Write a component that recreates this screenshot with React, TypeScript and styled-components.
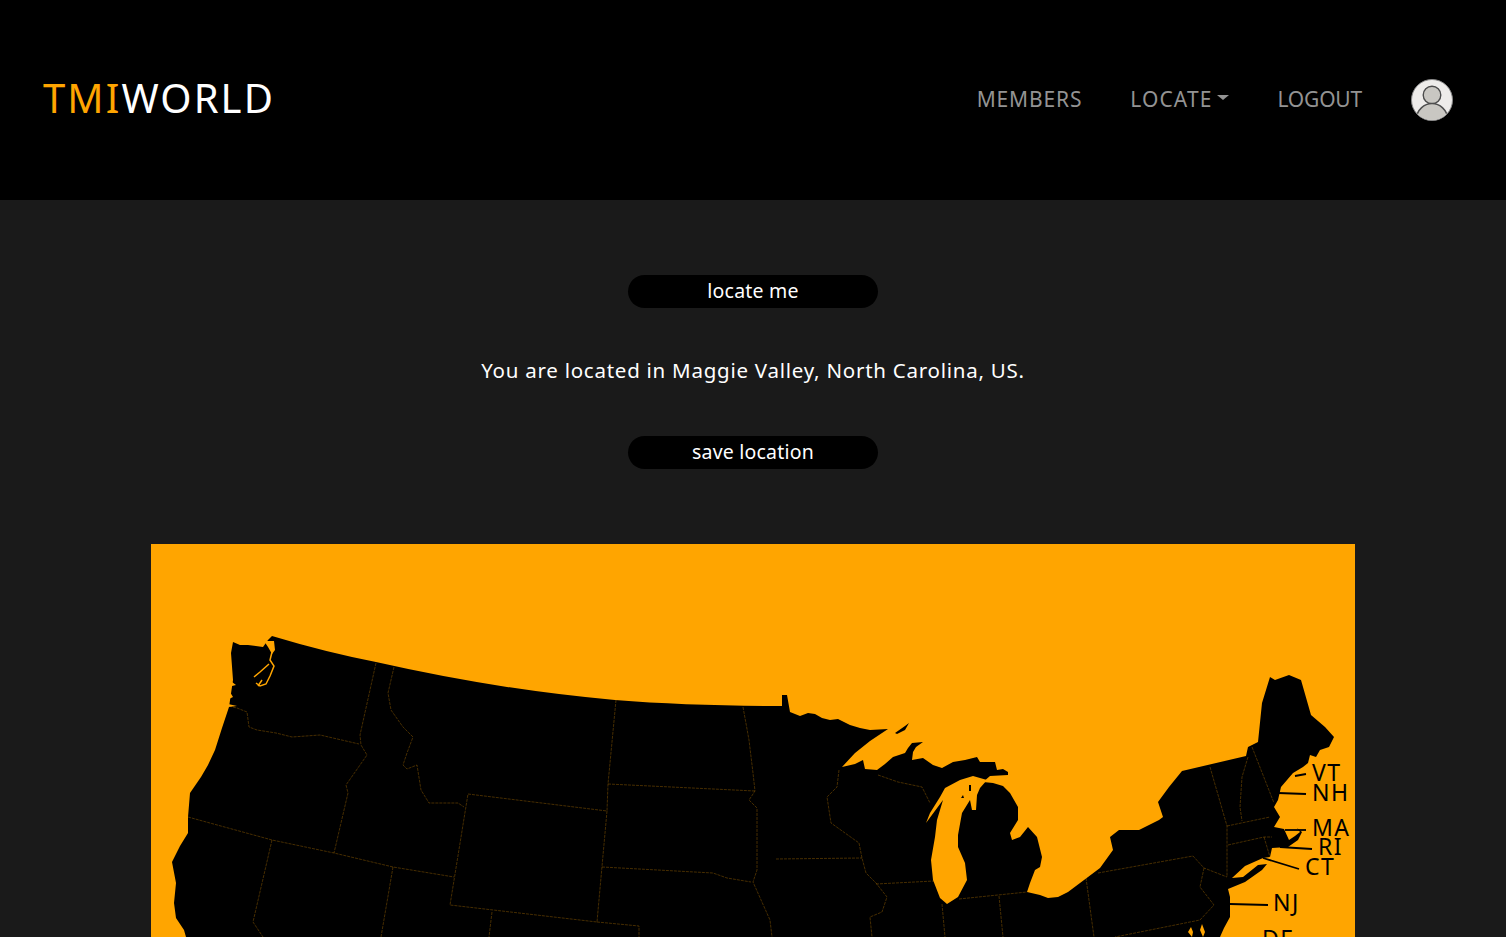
import React from "react";
import styled, { createGlobalStyle } from "styled-components";

const Global = createGlobalStyle`
  html, body { margin: 0; padding: 0; background: #1a1a1a; }
  body { font-family: "Noto Sans", "Open Sans", sans-serif; overflow: hidden; }
`;
const Page = styled.div`
  height: 937px;
  overflow: hidden;
  display: flex;
  flex-direction: column;
`;
const Header = styled.header`
  height: 200px;
  flex: none;
  background: #000;
  display: flex;
  align-items: center;
  justify-content: space-between;
  padding: 0 52px 0 43px;
`;
const Logo = styled.div`
  font-size: 40px;
  letter-spacing: 2.1px;
  color: #fff;
  line-height: 1;
  padding-bottom: 5px;
`;
const LogoAccent = styled.span`
  color: #ffa500;
`;
const Nav = styled.nav`
  display: flex;
  align-items: center;
  gap: 48px;
`;
const NavLink = styled.a<{ $caret?: boolean; $spacing: number }>`
  font-size: 21px;
  letter-spacing: ${(p) => p.$spacing}px;
  color: #939393;
  display: inline-flex;
  align-items: center;
  padding-bottom: 2px;
  ${(p) =>
    p.$caret &&
    `&::after {
      content: "";
      margin-left: 5px;
      margin-top: -3px;
      border-top: 5.5px solid #939393;
      border-left: 6px solid transparent;
      border-right: 6px solid transparent;
    }`}
`;
const Avatar = styled.svg`
  width: 44px;
  height: 44px;
  display: block;
`;
const Main = styled.main`
  flex: 1;
  display: flex;
  flex-direction: column;
  align-items: center;
  padding-top: 75px;
`;
const Pill = styled.button`
  width: 250px;
  height: 33px;
  border: 0;
  padding: 0 0 2px;
  border-radius: 16.5px;
  background: #000;
  color: #fff;
  font-family: inherit;
  font-size: 19.5px;
  letter-spacing: 0.2px;
  line-height: 31px;
`;
const Status = styled.p`
  margin: 47px 0 51px;
  height: 30px;
  line-height: 30px;
  font-size: 20.5px;
  letter-spacing: 0.75px;
  color: #fff;
`;
const MapPanel = styled.section`
  margin-top: 75px;
  width: 1204px;
  height: 393px;
  flex: none;
  background: #ffa500;
`;
const MapSvg = styled.svg`
  display: block;
  width: 100%;
  height: 100%;
`;
const StateLabel = styled.text`
  font-family: "Noto Sans", sans-serif;
  font-size: 23px;
  letter-spacing: 1.4px;
  fill: #000;
`;

const land =
  "M233,642 L240,645 L248,645 L263,647 L268,640 L272,636 Q325,652 376,662 Q500,690 615,700 Q690,706 782,706 L782,695 L787,695 L790,712 L800,716 L808,713 L815,714 L822,718 L830,720 L838,719 L850,725 L860,728 L870,730 L888,729 L870,741 L855,753 L842,767 L855,764 L863,760 L865,769 L877,770 L885,764 L893,757 L905,753 L908,748 L912,743 L923,742 L916,747 L913,752 L912,760 L923,758 L933,765 L942,768 L953,762 L965,760 L977,757 L980,762 L995,762 L997,770 L1003,769 L1008,772 L1008,775 L990,776 L983,782 L993,783 L1003,786 L1010,793 L1018,807 L1018,820 L1010,833 L1012,840 L1020,837 L1028,827 L1037,837 L1042,857 L1040,867 L1035,870 L1030,883 L1027,892 L1040,895 L1048,898 L1058,897 L1068,892 L1088,877 L1100,868 L1113,850 L1110,837 L1119,830 L1139,830 L1159,820 L1163,817 L1158,802 L1169,787 L1182,771 L1246,756 L1248,747 L1258,742 L1262,703 L1270,677 L1275,680 L1289,675 L1301,680 L1311,715 L1325,727 L1334,737 L1329,747 L1320,750 L1316,757 L1310,755 L1308,763 L1303,767 L1293,773 L1281,787 L1278,800 L1274,807 L1280,817 L1274,827 L1284,829 L1289,840 L1295,836 L1300,832 L1297,828 L1302,832 L1298,840 L1288,847 L1272,848 L1270,857 L1263,858 L1245,866 L1232,878 L1243,877 L1258,865 L1267,864 L1262,870 L1245,882 L1228,889 L1230,897 L1230,917 L1224,928 L1220,937 L1220,950 L180,950 L186,937 L184,930 L176,918 L174,903 L176,883 L172,862 L180,846 L188,833 L188,817 L190,793 L201,777 L208,765 L215,750 L222,728 L229,707 L233,680 L231,653 Z";

const borders = [
  "M229,706 L237,708 L247,712 L249,727 L257,730 L276,733 L292,737 L320,735 L359,744",
  "M376,663 L360,735 L361,745 L367,755 L346,785 L348,793 L334,853",
  "M188,817 L272,840 L334,853 L393,867 L454,877",
  "M272,840 L253,922 L263,937",
  "M393,867 L381,937",
  "M394,667 L388,693 L391,710 L403,727 L413,737 L407,753 L403,765 L407,769 L417,765 L421,790 L429,803 L458,803 L464,807",
  "M468,794 L607,811 L597,922 L450,905 Z",
  "M616,700 L608,784 L607,811",
  "M608,784 L755,791",
  "M602,867 L713,873 L727,878 L751,882",
  "M743,707 L749,740 L753,773 L755,791 L749,800 L757,808 L757,870 L753,882 L770,920 L772,937",
  "M492,912 L489,937",
  "M597,922 L639,926 L639,937",
  "M776,859 L862,858",
  "M839,770 L837,787 L827,797 L831,823 L859,843 L862,858 L866,873 L876,883 L887,897 L882,912 L870,917 L872,937",
  "M876,884 L934,881",
  "M878,775 L898,782 L922,787 L930,803",
  "M942,904 L945,937",
  "M959,899 L1027,892",
  "M999,896 L1003,937",
  "M1086,878 L1094,937",
  "M1098,873 L1193,856 L1204,868 L1227,877",
  "M1204,868 L1200,887 L1214,905 L1200,920 L1115,937",
  "M1210,767 L1227,826 L1227,877",
  "M1248,757 L1242,777 L1240,807 L1242,821",
  "M1252,747 L1274,803",
  "M1227,826 L1270,817",
  "M1228,845 L1264,837 L1272,837",
  "M1264,837 L1270,857",
];

const lake =
  "M973,776 L987,780 L980,788 L977,795 L976,810 L972,810 L970,800 L962,813 L958,835 L958,847 L965,863 L967,880 L958,897 L947,904 L940,898 L933,880 L931,860 L935,837 L937,820 L943,800 L926,823 L930,813 L940,797 L945,788 L960,780 Z";

const leaders = [
  "M1295,776 L1306,774",
  "M1278,793 L1306,794",
  "M1285,830 L1306,830",
  "M1280,847 L1312,849",
  "M1263,858 L1299,869",
  "M1230,904 L1268,905",
];

const labels: [string, number, number][] = [
  ["VT", 1312, 781],
  ["NH", 1312, 801],
  ["MA", 1312, 836],
  ["RI", 1318, 855],
  ["CT", 1305, 875],
  ["NJ", 1273, 911],
  ["DE", 1262, 947],
];

const navItems = [
  { label: "MEMBERS", spacing: 0.85 },
  { label: "LOCATE", spacing: 1.1, caret: true },
  { label: "LOGOUT", spacing: -0.2 },
];

export default function App() {
  return (
    <Page>
      <Global />
      <Header>
        <Logo>
          <LogoAccent>TMI</LogoAccent>WORLD
        </Logo>
        <Nav>
          {navItems.map((n) => (
            <NavLink key={n.label} $spacing={n.spacing} $caret={n.caret}>
              {n.label}
            </NavLink>
          ))}
          <Avatar viewBox="0 0 44 44">
            <circle cx="22" cy="22" r="20.5" fill="#eeecea" stroke="#8a8a8a" />
            <clipPath id="av">
              <circle cx="22" cy="22" r="20" />
            </clipPath>
            <g clipPath="url(#av)" fill="#c9c7c2" stroke="#4d4d4d" strokeWidth="1.4">
              <circle cx="22" cy="17" r="8.8" />
              <path d="M6,41 C7,32 14,25.5 22,25.5 C30,25.5 37,32 38,41 C33,45 11,45 6,41 Z" />
            </g>
          </Avatar>
        </Nav>
      </Header>
      <Main>
        <Pill>locate me</Pill>
        <Status>You are located in Maggie Valley, North Carolina, US.</Status>
        <Pill>save location</Pill>
        <MapPanel>
          <MapSvg viewBox="151 544 1204 393">
            <path d={land} fill="#000" strokeLinejoin="round" />
            <path d="M895,733 L905,726 L909,723 L905,730 L897,734 Z" fill="#000" />
            <path d={lake} fill="#ffa500" />
            <path d="M969,785 L971,785 L971,791 L969,791 Z M961,798 L963,795 L964,798 Z" fill="#000" />
            <path d="M264,641 L274,641 L275,650 L272,654 L268,647 Z" fill="#ffa500" />
            <path d="M272,652 L270,660 L274,666 L270,676 L266,684 L260,686 L256,683 M269,664 L260,672 L254,677 M262,680 L258,686" fill="none" stroke="#ffa500" strokeWidth="1.5" />
            <path d="M232,682 L236,685 L232,686 Z M230,692 L233,697 L229,699 Z M228,704 L237,706 L228,707 Z" fill="#ffa500" />
            <g fill="none" stroke="#ffa500" strokeOpacity="0.35" strokeWidth="0.8" strokeDasharray="3 1">
              {borders.map((d) => (
                <path key={d} d={d} />
              ))}
            </g>
            <path d="M1192,937 L1188,932 L1191,927 L1193,932 Z M1203,937 L1200,930 L1202,924 L1205,932 Z" fill="#ffa500" />
            <g fill="none" stroke="#000" strokeWidth="1.8">
              {leaders.map((d) => (
                <path key={d} d={d} />
              ))}
            </g>
            {labels.map(([t, x, y]) => (
              <StateLabel key={t} x={x} y={y}>
                {t}
              </StateLabel>
            ))}
          </MapSvg>
        </MapPanel>
      </Main>
    </Page>
  );
}
